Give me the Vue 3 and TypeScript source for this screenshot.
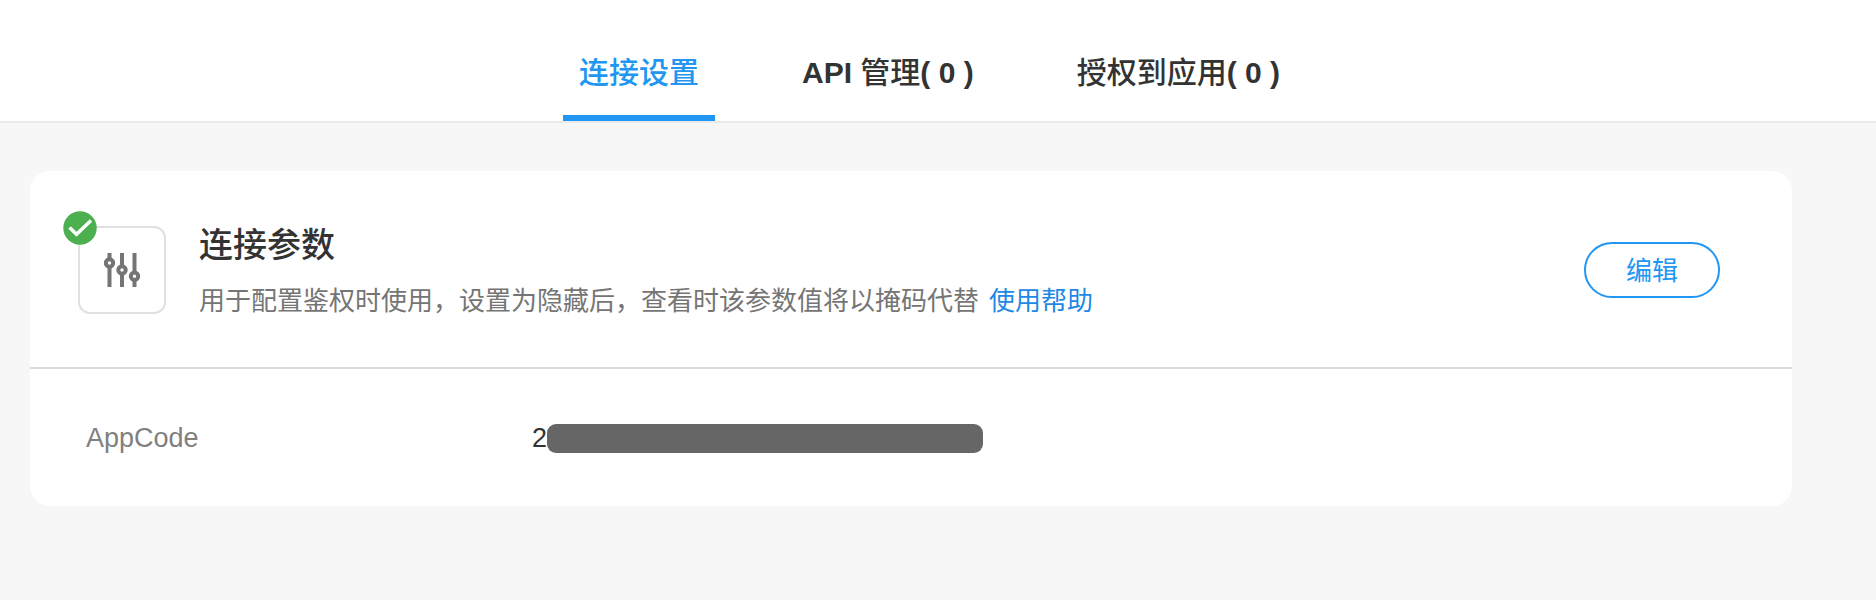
<script setup lang="ts">
import { ref } from 'vue'

interface Tab {
  id: string
  latin?: string
  label: string
  count?: number
}

const tabs: Tab[] = [
  { id: 'connect', label: '连接设置' },
  { id: 'api', latin: 'API', label: '管理', count: 0 },
  { id: 'apps', label: '授权到应用', count: 0 },
]
const active = ref('connect')
</script>

<template>
  <div class="page">
    <nav class="tabs" role="tablist">
      <button
        v-for="tab in tabs"
        :key="tab.id"
        type="button"
        role="tab"
        class="tab"
        :class="{ active: tab.id === active }"
        :aria-selected="tab.id === active"
        @click="active = tab.id"
      ><b v-if="tab.latin">{{ tab.latin }}&nbsp;</b>{{ tab.label }}<b v-if="tab.count !== undefined">( {{ tab.count }} )</b></button>
    </nav>

    <main class="content">
      <section class="card">
        <header class="card-head">
          <div class="icon-box">
            <svg class="sliders" viewBox="0 0 36 34" aria-hidden="true">
              <g fill="none" stroke="#757575" stroke-width="4">
                <path d="M5.500 0V6M5.500 14V34M18 0V13M18 21V34M30.500 0V19M30.500 27V34" />
                <circle cx="5.500" cy="10" r="3.700" />
                <circle cx="18" cy="17" r="3.700" />
                <circle cx="30.500" cy="23.300" r="3.700" />
              </g>
            </svg>
            <svg class="badge" viewBox="0 0 34 34" aria-hidden="true">
              <circle cx="17" cy="17" r="16.700" fill="#4caf50" />
              <path d="M6.500 16.500L13.500 23.300L28 9.500" fill="none" stroke="#fff" stroke-width="3.400" />
            </svg>
          </div>
          <div class="intro">
            <h2 class="title">连接参数</h2>
            <p class="desc">用于配置鉴权时使用，设置为隐藏后，查看时该参数值将以掩码代替<a class="help" href="#">使用帮助</a></p>
          </div>
          <button type="button" class="edit">编辑</button>
        </header>
        <dl class="params">
          <dt class="name">AppCode</dt>
          <dd class="value">2<span class="mask"></span></dd>
        </dl>
      </section>
    </main>
  </div>
</template>

<style>
body {
  margin: 0;
  background: #f7f7f7;
}
</style>

<style scoped>
.page {
  min-height: 100vh;
  background: #f7f7f7;
  color: #333;
  font-family: "Liberation Sans", "Noto Sans CJK SC", sans-serif;
}
.tabs {
  display: flex;
  justify-content: center;
  gap: 71px;
  padding: 24px 17px 0 0;
  background: #fff;
  border-bottom: 2px solid #eaeaea;
}
.tab {
  box-sizing: border-box;
  height: 97px;
  padding: 6px 16px 0;
  border: 0;
  border-bottom: 6px solid transparent;
  background: none;
  color: #333;
  font: inherit;
  font-size: 30px;
  font-weight: 500;
  line-height: 40px;
  white-space: nowrap;
  cursor: pointer;
}
.tab.active {
  border-bottom-color: #2196f3;
  color: #2196f3;
}
.content {
  padding: 48px 84px 48px 30px;
}
.card {
  border-radius: 20px;
  background: #fff;
}
.card-head {
  display: flex;
  align-items: center;
  box-sizing: border-box;
  min-height: 198px;
  padding: 2px 72px 0 48px;
  border-bottom: 2px solid #dcdcdc;
}
.icon-box {
  position: relative;
  display: flex;
  align-items: center;
  justify-content: center;
  flex: none;
  box-sizing: border-box;
  width: 88px;
  height: 88px;
  border: 2px solid #e0e0e0;
  border-radius: 12px;
}
.sliders {
  width: 36px;
  height: 34px;
}
.badge {
  position: absolute;
  top: -17px;
  left: -17px;
  width: 34px;
  height: 34px;
}
.intro {
  flex: 1;
  margin-left: 33px;
  padding-top: 4px;
}
.title {
  margin: 0 0 14px;
  font-size: 34px;
  font-weight: 500;
  line-height: 44px;
}
.desc {
  margin: 0;
  color: #757575;
  font-size: 26px;
  line-height: 40px;
}
.help {
  margin-left: 10px;
  color: #1e88e5;
  text-decoration: none;
}
.edit {
  flex: none;
  box-sizing: border-box;
  width: 136px;
  height: 56px;
  padding: 0 0 4px;
  border: 2px solid #2196f3;
  border-radius: 28px;
  background: #fff;
  color: #2196f3;
  font: inherit;
  font-size: 26px;
  cursor: pointer;
}
.params {
  display: flex;
  align-items: center;
  margin: 0;
  padding: 49px 56px 48px;
  font-size: 27px;
  line-height: 40px;
}
.name {
  width: 446px;
  color: #808080;
}
.value {
  display: flex;
  align-items: center;
  margin: 0;
}
.mask {
  width: 436px;
  height: 29px;
  border-radius: 9px;
  background: #666;
}
</style>
